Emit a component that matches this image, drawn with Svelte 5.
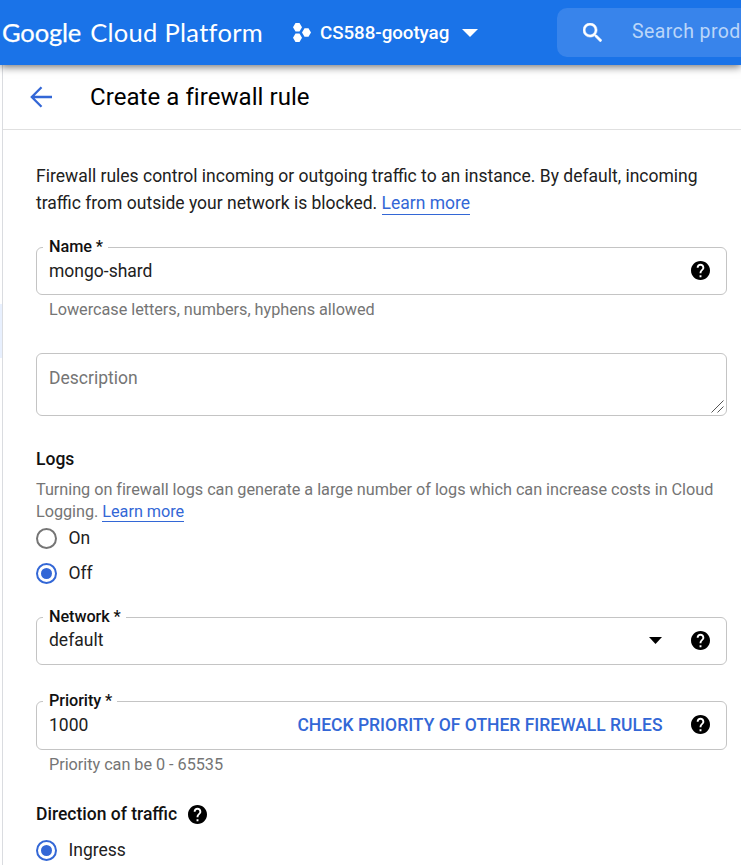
<script>
  let logs = $state('Off');
  let direction = $state('Ingress');
</script>

{#snippet help()}
  <svg class="help" viewBox="2 2 20 20" aria-hidden="true">
    <path d="M12 2C6.48 2 2 6.48 2 12s4.48 10 10 10 10-4.48 10-10S17.52 2 12 2zm1 17h-2v-2h2v2zm2.07-7.75l-.9.92C13.45 12.9 13 13.5 13 15h-2v-.5c0-1.1.45-2.1 1.17-2.83l1.24-1.26c.37-.36.59-.86.59-1.41 0-1.1-.9-2-2-2s-2 .9-2 2H8c0-2.21 1.79-4 4-4s4 1.79 4 4c0 .88-.36 1.68-.93 2.25z" />
  </svg>
{/snippet}

{#snippet radio(text, on, pick)}
  <button class="radio" type="button" role="radio" aria-checked={on} onclick={pick}>
    <span class="ring" class:on></span>
    <span class="opt">{text}</span>
  </button>
{/snippet}

<div class="page">
  <header>
    <div class="brand"><span class="google">Google</span><span class="cloud">Cloud Platform</span></div>
    <div class="project">
      <svg class="dots" width="18" height="19" viewBox="0 0 18 19">
        <path d="M2.5 0h4L9 4.2 6.5 8.4h-4L0 4.2zM2.5 10.6h4L9 14.8 6.5 19h-4L0 14.8zM11.5 5.3h4L18 9.5l-2.5 4.2h-4L9 9.5z" />
      </svg>
      <span class="pname">CS588-gootyag</span>
      <svg class="down" width="16" height="8" viewBox="0 0 16 8"><path d="M0 0h16L8 8z" /></svg>
    </div>
    <div class="search">
      <svg width="19" height="19" viewBox="3 3 17.5 17.5"><path d="M15.500 14h-.790l-.280-.270A6.470 6.470 0 0 0 16 9.500 6.500 6.500 0 1 0 9.500 16c1.610 0 3.090-.590 4.230-1.570l.270.280v.790l5 4.990L20.490 19l-4.990-5zm-6 0C7.010 14 5 11.990 5 9.500S7.010 5 9.500 5 14 7.010 14 9.500 11.990 14 9.500 14z" /></svg>
      <span>Search prod</span>
    </div>
  </header>

  <div class="body">
    <nav><div class="current"></div></nav>
    <main>
      <div class="titlebar">
        <svg width="22" height="22" viewBox="0 0 22 22"><path d="M11.500 1.200L1.800 11l9.700 9.800M2 11h20" /></svg>
        <h1>Create a firewall rule</h1>
      </div>
      <form>
        <p class="intro">
          Firewall rules control incoming or outgoing traffic to an instance. By default, incoming<br />
          traffic from outside your network is blocked. <span class="link">Learn more</span>
        </p>

        <div class="field name">
          <span class="label">Name *</span>
          <span class="value">mongo-shard</span>
          {@render help()}
        </div>
        <div class="hint">Lowercase letters, numbers, hyphens allowed</div>

        <div class="field area">
          <span class="value ph">Description</span>
          <svg class="grip" width="13" height="13" viewBox="0 0 13 13"><path d="M.5 12.500l12-12M6.500 12.500l6-6" /></svg>
        </div>

        <h2 class="logs">Logs</h2>
        <p class="note">
          Turning on firewall logs can generate a large number of logs which can increase costs in Cloud<br />
          Logging. <span class="link">Learn more</span>
        </p>
        <div class="group" role="radiogroup">
          {@render radio('On', logs === 'On', () => (logs = 'On'))}
          {@render radio('Off', logs === 'Off', () => (logs = 'Off'))}
        </div>

        <div class="field network">
          <span class="label">Network *</span>
          <span class="value">default</span>
          <svg class="caret" width="13" height="7" viewBox="0 0 13 7"><path d="M0 0h13L6.500 7z" /></svg>
          {@render help()}
        </div>

        <div class="field priority">
          <span class="label">Priority *</span>
          <span class="value">1000</span>
          <span class="check">CHECK PRIORITY OF OTHER FIREWALL RULES</span>
          {@render help()}
        </div>
        <div class="hint">Priority can be 0 - 65535</div>

        <h2 class="direction">Direction of traffic {@render help()}</h2>
        {@render radio('Ingress', direction === 'Ingress', () => (direction = 'Ingress'))}
      </form>
    </main>
  </div>
</div>

<style>
  .page {
    width: 741px;
    height: 865px;
    overflow: hidden;
    display: flex;
    flex-direction: column;
    background: #fff;
    color: #212121;
    font: 17.5px/27px Roboto, sans-serif;
  }
  svg { flex: none; display: block; }
  header {
    position: relative;
    z-index: 1;
    flex: none;
    height: 65px;
    display: flex;
    align-items: center;
    background: #1a73e8;
    color: #fff;
    fill: #fff;
    box-shadow: 0 2px 8px rgba(0, 0, 0, 0.55);
    white-space: nowrap;
  }
  .brand {
    width: 293px;
    flex: none;
    box-sizing: border-box;
    padding: 0 0 2px 2px;
    font: 25.500px/30px Lato, sans-serif;
    display: flex;
    gap: 9px;
  }
  .google { -webkit-text-stroke: 0.25px #fff; letter-spacing: -0.15px; }
  .cloud { letter-spacing: 0.300px; }
  .project { width: 264px; flex: none; display: flex; align-items: center; }
  .pname { width: 142px; padding-left: 9px; font-size: 18.750px; font-weight: 500; letter-spacing: -0.050px; margin-top: 1px; }
  .down { margin-top: 1px; }
  .search {
    flex: none;
    width: 184px;
    height: 49px;
    box-sizing: border-box;
    padding-left: 26px;
    display: flex;
    align-items: center;
    gap: 30px;
    background: #3884eb;
    border-radius: 10px 0 0 10px;
    color: #bbd6f9;
    font-size: 19.500px;
  }
  .search svg { stroke: #fff; stroke-width: 0.5; }
  .search span { margin-top: -3px; letter-spacing: 0.400px; }
  .body { flex: 1; display: flex; min-height: 0; }
  nav { width: 2px; flex: none; border-right: 1px solid #dadce0; padding-top: 239px; }
  .current { height: 54px; background: #e8f0fe; }
  main { flex: 1; min-width: 0; }
  .titlebar {
    height: 64px;
    display: flex;
    align-items: center;
    padding-left: 27px;
    gap: 38px;
    border-bottom: 1px solid #e0e0e0;
  }
  .titlebar svg { fill: none; stroke: #3367d6; stroke-width: 2.300; }
  h1 { margin: 0; font-size: 24px; font-weight: 400; color: #000; line-height: 30px; letter-spacing: 0.060px; }
  form { padding: 33px 14px 0 33px; }
  p { margin: 0; white-space: nowrap; }
  .link { color: #3367d6; border-bottom: 1px solid #3367d6; }
  .intro .link { padding-bottom: 1px; }
  .field {
    position: relative;
    box-sizing: border-box;
    height: 48px;
    border: 1px solid #c4c4c4;
    border-radius: 6px;
    display: flex;
    align-items: center;
    padding: 0 16.500px 0 12px;
  }
  .label {
    position: absolute;
    left: 6px;
    top: -11px;
    padding: 0 5px 0 6px;
    background: #fff;
    color: #111;
    font-size: 16.250px;
    font-weight: 500;
    line-height: 20px;
    letter-spacing: -0.080px;
  }
  .value { flex: 1; }
  .help { width: 19px; height: 19px; fill: #000; }
  .field .help { margin-top: -1px; }
  .name { margin-top: 30px; }
  .hint, .note { color: #757575; font-size: 16.250px; line-height: 22px; letter-spacing: -0.036px; }
  .hint { padding-left: 13px; margin-top: 4px; }
  .area { height: 63px; margin-top: 32px; align-items: flex-start; padding-top: 11px; }
  .ph { color: #757575; }
  .grip { position: absolute; right: 2px; bottom: 2px; fill: none; stroke: #555; }
  h2 { margin: 0; font-size: 17.500px; font-weight: 500; line-height: 22px; color: #111; }
  .logs { margin-top: 32px; }
  .note { margin-top: 9px; }
  .group { display: flex; flex-direction: column; gap: 14px; margin-top: 5px; }
  .radio {
    display: flex;
    align-items: center;
    gap: 11.500px;
    height: 21px;
    padding: 0;
    border: 0;
    background: none;
    font: inherit;
    color: inherit;
  }
  .ring {
    width: 21px;
    height: 21px;
    box-sizing: border-box;
    border: 2px solid #757575;
    border-radius: 50%;
    display: flex;
    align-items: center;
    justify-content: center;
  }
  .ring.on { border-color: #3367d6; }
  .ring.on::after { content: ''; width: 11px; height: 11px; border-radius: 50%; background: #3367d6; }
  .network { margin-top: 33px; }
  .network .value { margin-top: -2px; }
  .caret { margin: -1px 29px 0 0; }
  .priority { height: 49px; margin-top: 36px; }
  .priority .help { margin-top: -2px; }
  .check { color: #3367d6; font-weight: 500; margin-right: 28px; }
  .direction { display: flex; align-items: center; gap: 11px; margin: 27px 0 15px; }
</style>
